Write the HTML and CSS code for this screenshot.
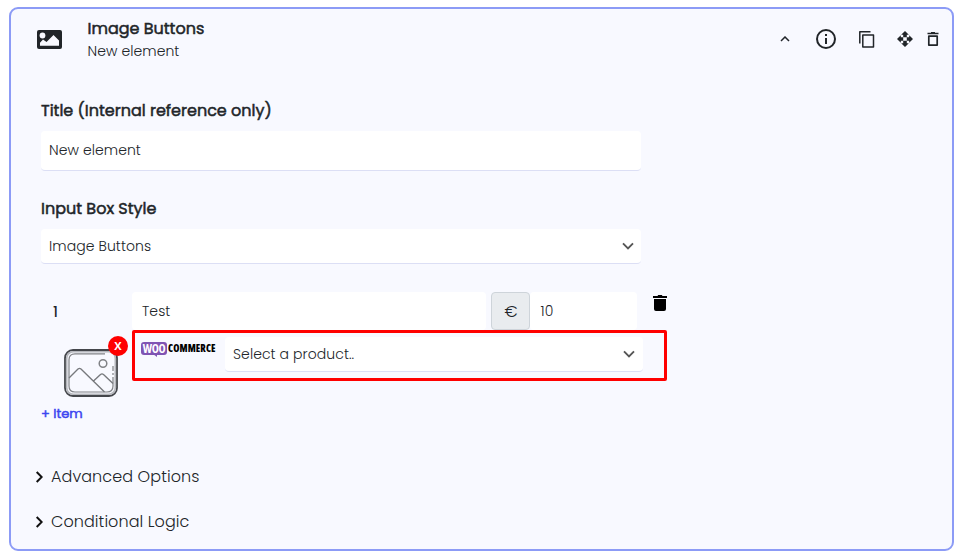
FILE: index.html
```html
<!DOCTYPE html>
<html lang="en">
<head>
<meta charset="utf-8">
<title>Image Buttons</title>
<link rel="stylesheet" href="styles.css">
</head>
<body>

<div class="card">
    <div class="header">
        <svg class="type-icon" width="25" height="19" viewBox="0 0 25 19">
            <rect width="25" height="19" rx="2" fill="#212529"/>
            <circle cx="5.5" cy="5.500" r="2.900" fill="#f8f9ff"/>
            <path d="M3 15.800v-3l3-3.300 3.500 2.500L16.500 5l5.500 5.500v5.300z" fill="#f8f9ff"/>
        </svg>
        <div class="heading">
            <div class="name">Image Buttons</div>
            <div class="subname">New element</div>
        </div>
        <div class="actions">
            <svg class="collapse" width="10" height="6" viewBox="0 0 10 6"><path d="M1 5l4-4 4 4" fill="none" stroke="#212529" stroke-width="1.500"/></svg>
            <svg class="info" width="20" height="20" viewBox="0 0 20 20">
                <circle cx="10" cy="10" r="9" fill="none" stroke="#212529" stroke-width="2"/>
                <path d="M9 5h2v2H9zM9 9h2v6H9z" fill="#212529"/>
            </svg>
            <svg class="copy" width="16" height="17" viewBox="0 0 16 17">
                <path d="M.800 12.500V.800H11.500M3.800 3.900h10.700v12H3.800z" fill="none" stroke="#212529" stroke-width="1.500" stroke-linejoin="round"/>
            </svg>
            <svg class="move" width="16" height="16" viewBox="0 0 16 16">
                <path d="M8 0l3.800 3.800H9.800V6.200H6.200V3.800h-2zM8 16l-3.800-3.800h2V9.800h3.600v2.400h2zM0 8l3.800-3.800v2h2.400v3.600H3.800v2zM16 8l-3.800 3.800v-2H9.800V6.200h2.400v-2z" fill="#212529"/>
            </svg>
            <svg class="remove" width="12" height="14" viewBox="0 0 12 14">
                <path d="M.500 1.500h11M4 .700h4M1.800 4.200h8.400v8.900H1.800z" fill="none" stroke="#212529" stroke-width="1.700" stroke-linejoin="round"/>
            </svg>
        </div>
    </div>

    <div class="field">
        <div class="label label-title">Title (Internal reference only)</div>
        <div class="input input-title">New element</div>
    </div>

    <div class="field field-style">
        <div class="label label-style">Input Box Style</div>
        <div class="input select">
            <span>Image Buttons</span>
            <svg width="12" height="8" viewBox="0 0 12 8"><path d="M1 1.300l5 5 5-5" fill="none" stroke="#555" stroke-width="1.900"/></svg>
        </div>
    </div>

    <div class="item">
        <div class="item-left">
            <div class="number">1</div>
            <div class="thumb">
                <svg width="54" height="48" viewBox="0 0 54 48" fill="none">
                    <rect x="1" y="1" width="52" height="46" rx="8" stroke="#44464b" stroke-width="1.800"/>
                    <rect x="2.700" y="2.700" width="48.600" height="42.600" rx="6.500" stroke="#b4b6bb" stroke-width="1.600"/>
                    <path d="M41 4.800H11q-6 0-6 6V37q0 6 6 6h32q6 0 6-6v-9M49 17v5M49 24v2" stroke="#808286" stroke-width="1.200"/>
                    <circle cx="39" cy="14.500" r="3.800" stroke="#808286" stroke-width="1.500"/>
                    <path d="M5 29l9-9q1.500-1.200 3 0l23.500 23M29.500 32l7-6.500q1.500-1.200 3 0l9.500 9" stroke="#77797d" stroke-width="1.400"/>
                </svg>
                <span class="badge">X</span>
            </div>
        </div>
        <div class="item-main">
            <div class="values">
                <div class="input input-name">Test</div>
                <div class="currency">€</div>
                <div class="input input-price">10</div>
                <svg class="trash" width="14" height="16" viewBox="0 0 14 16">
                    <path d="M0 1h4.500l.700-1h3.600l.700 1H14v2H0zM1 4h12v10q0 2-2 2H3q-2 0-2-2z" fill="#000"/>
                </svg>
            </div>
            <div class="product">
                <div class="woo"><span class="woo-mark">WOO</span><span class="woo-text">COMMERCE</span></div>
                <div class="input select select-product">
                    <span>Select a product..</span>
                    <svg width="12" height="8" viewBox="0 0 12 8"><path d="M1 1.300l5 5 5-5" fill="none" stroke="#555" stroke-width="1.900"/></svg>
                </div>
            </div>
        </div>
    </div>
    <div class="add">+ Item</div>

    <div class="section">
        <svg width="8" height="12" viewBox="0 0 8 12"><path d="M1.700 1l5 5-5 5" fill="none" stroke="#111" stroke-width="2"/></svg>
        <span>Advanced Options</span>
    </div>
    <div class="section">
        <svg width="8" height="12" viewBox="0 0 8 12"><path d="M1.700 1l5 5-5 5" fill="none" stroke="#111" stroke-width="2"/></svg>
        <span>Conditional Logic</span>
    </div>
</div>

</body>
</html>
```

FILE: styles.css
```css
* {
    box-sizing: border-box;
}

body {
    margin: 0;
    padding: 7px 6px 0 9px;
    background: #fff;
    color: #212529;
    font-family: Poppins, Inter, sans-serif;
    font-size: 14px;
    font-weight: 300;
    letter-spacing: 0.08px;
    white-space: nowrap;
}

svg {
    display: block;
    flex: none;
}

.card {
    height: 544px;
    border: 2px solid #8c9bf6;
    border-radius: 9px;
    background: #f8f9ff;
}

.header {
    display: flex;
    height: 84px;
    padding-left: 26px;
}

.type-icon {
    margin-top: 21px;
}

.heading {
    margin: 8px 0 0 25.5px;
}

.name, .label, .add {
    font-weight: 400;
    letter-spacing: 0;
    -webkit-text-stroke: 0.5px currentColor;
}

.name {
    height: 23px;
    line-height: 23px;
    font-size: 16px;
}

.subname {
    height: 22px;
    line-height: 22px;
}

.actions {
    display: flex;
    align-items: center;
    height: 60px;
    margin-left: auto;
    padding-right: 13px;
}

.info {
    margin-left: 26px;
}

.copy {
    margin-left: 23px;
}

.move {
    margin-left: 22px;
}

.remove {
    margin-left: 14px;
}

.field {
    width: 600px;
    margin-left: 30px;
}

.field-style {
    margin-top: 26px;
}

.label {
    font-size: 16px;
}

.label-title {
    height: 38px;
    line-height: 36px;
}

.label-style {
    height: 32px;
    line-height: 24px;
}

.input {
    display: flex;
    align-items: center;
    height: 35px;
    padding: 0 8px;
    border-bottom: 1px solid #dcdff5;
    border-radius: 4px;
    background: #fff;
}

.input-title {
    height: 40px;
}

.select {
    justify-content: space-between;
    padding-right: 7px;
}

.item {
    display: flex;
    margin: 28px 0 0 30px;
}

.item-left {
    width: 91px;
}

.number {
    height: 57px;
    padding-left: 12px;
    line-height: 40px;
    font-weight: 500;
}

.thumb {
    position: relative;
    width: 54px;
    margin-left: 23px;
}

.badge {
    position: absolute;
    left: 44px;
    top: -13px;
    width: 20px;
    height: 20px;
    border-radius: 50%;
    background: #f00;
    color: #fff;
    font-family: "Open Sans", sans-serif;
    font-size: 11px;
    font-weight: 700;
    line-height: 20px;
    text-align: center;
}

.values {
    display: flex;
    height: 38px;
}

.values .input {
    height: 38px;
    border-bottom: none;
}

.input-name {
    width: 354px;
    padding-left: 10px;
}

.currency {
    width: 39px;
    height: 38px;
    margin-left: 5px;
    border: 1px solid #ced4da;
    border-radius: 4px;
    background: #e9ecef;
    font-size: 16px;
    font-weight: 300;
    line-height: 37px;
    padding-left: 1px;
    text-align: center;
}

.values .input-price {
    width: 107px;
    padding-left: 10.5px;
}

.trash {
    margin: 3px 0 0 16px;
}

.product {
    display: flex;
    width: 535px;
    height: 51px;
    border: 3px solid #f00;
    border-radius: 2px;
    padding: 4px 0 0 6px;
}

.woo {
    display: flex;
    width: 84px;
    height: 14px;
    margin-top: 5px;
    font-family: "Open Sans", sans-serif;
    line-height: 13px;
}

.woo-mark {
    position: relative;
    width: 26px;
    height: 13px;
    border-radius: 3px;
    background: #7f54b3;
    color: #fff;
    font-size: 12px;
    font-stretch: 75%;
    font-weight: 700;
    letter-spacing: -0.3px;
    text-align: center;
}

.woo-mark::after {
    content: "";
    position: absolute;
    left: 12px;
    top: 12px;
    border-top: 3px solid #7f54b3;
    border-left: 4px solid transparent;
}

.woo-text {
    margin-left: 1px;
    color: #000;
    font-size: 10px;
    font-stretch: 82%;
    font-weight: 800;
    letter-spacing: 0.1px;
}

.select-product {
    width: 418px;
    padding-right: 8px;
}

.add {
    height: 30px;
    margin: 2px 0 0 30px;
    color: #3c46f0;
    font-size: 13px;
    line-height: 30px;
}

.section {
    display: flex;
    align-items: center;
    gap: 8px;
    height: 45px;
    padding-left: 24px;
    font-size: 16px;
}

.add + .section {
    margin-top: 25px;
}
```
